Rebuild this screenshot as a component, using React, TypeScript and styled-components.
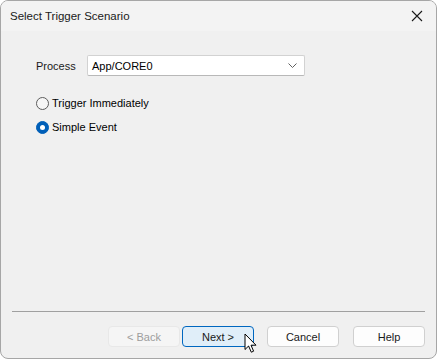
import React from 'react';
import styled, { createGlobalStyle } from 'styled-components';

const GlobalStyle = createGlobalStyle`
  html, body {
    margin: 0;
    padding: 0;
    background: #ffffff;
  }
  body {
    font-family: 'Liberation Sans', Arial, sans-serif;
    font-size: 11px;
    color: #000000;
  }
`;

const Window = styled.div`
  position: relative;
  box-sizing: border-box;
  width: 437px;
  height: 359px;
  border: 1px solid #a6a6a6;
  border-radius: 8px;
  overflow: hidden;
  display: flex;
  flex-direction: column;
  background: #f0f0f0;
`;

const TitleBar = styled.div`
  height: 30px;
  flex: none;
  display: flex;
  align-items: center;
  justify-content: space-between;
  padding: 0 13px 0 9px;
  background: #f3f3f3;
  font-size: 11.5px;
  color: #1a1a1a;
`;

const CloseIcon = styled.svg`
  width: 12px;
  height: 12px;
  margin-top: -1px;
`;

const Body = styled.div`
  flex: 1;
  display: flex;
  flex-direction: column;
  padding: 24px 0 0 35px;
`;

const FieldRow = styled.div`
  display: flex;
  align-items: center;
`;

const Label = styled.span`
  width: 51px;
  color: #1a1a1a;
`;

const Combo = styled.div`
  box-sizing: border-box;
  width: 218px;
  height: 21px;
  display: flex;
  align-items: center;
  justify-content: space-between;
  padding: 0 7px 0 4px;
  background: #ffffff;
  border: 1px solid #d2d2d2;
  border-bottom-color: #b8b8b8;
  border-radius: 2px;
`;

const RadioList = styled.div`
  display: flex;
  flex-direction: column;
  gap: 4px;
  margin-top: 17px;
`;

const RadioRow = styled.label`
  display: flex;
  align-items: center;
  height: 20px;
  gap: 3px;
`;

const RadioDot = styled.span<{ $checked?: boolean }>`
  box-sizing: border-box;
  width: 13px;
  height: 13px;
  border-radius: 50%;
  display: grid;
  place-items: center;
  background: ${({ $checked }) => ($checked ? '#005fb8' : '#f6f6f6')};
  border: 1px solid ${({ $checked }) => ($checked ? '#005fb8' : '#5c5c5c')};
  &::after {
    content: '';
    display: ${({ $checked }) => ($checked ? 'block' : 'none')};
    width: 5px;
    height: 5px;
    border-radius: 50%;
    background: #ffffff;
  }
`;

const Footer = styled.div`
  flex: none;
  padding: 0 11px 11px 11px;
`;

const Separator = styled.div`
  height: 1px;
  background: #a0a0a0;
  margin-bottom: 14px;
`;

const ButtonRow = styled.div`
  display: flex;
  justify-content: flex-end;
`;

const Button = styled.button<{ $variant?: 'default' | 'disabled'; $gap?: number }>`
  box-sizing: border-box;
  width: 72px;
  height: 21px;
  margin-right: ${({ $gap }) => $gap ?? 0}px;
  padding: 0;
  font: inherit;
  border-radius: 4px;
  border: 1px solid
    ${({ $variant }) =>
      $variant === 'default' ? '#0067c0' : $variant === 'disabled' ? '#e8e8e8' : '#d0d0d0'};
  background: ${({ $variant }) =>
    $variant === 'default' ? '#e0eef9' : $variant === 'disabled' ? '#f5f5f5' : '#fdfdfd'};
  color: ${({ $variant }) => ($variant === 'disabled' ? '#9d9d9d' : '#1a1a1a')};
`;

const Cursor = styled.svg`
  position: absolute;
  left: 243px;
  top: 332px;
  width: 14px;
  height: 21px;
`;

export default function App() {
  return (
    <>
      <GlobalStyle />
      <Window>
        <TitleBar>
          <span>Select Trigger Scenario</span>
          <CloseIcon viewBox="0 0 12 12">
            <path d="M1 1 L11 11 M11 1 L1 11" stroke="#1a1a1a" strokeWidth="1.1" fill="none" />
          </CloseIcon>
        </TitleBar>
        <Body>
          <FieldRow>
            <Label>Process</Label>
            <Combo>
              <span>App/CORE0</span>
              <svg width="9" height="5" viewBox="0 0 9 5">
                <path d="M0.5 0.5 L4.5 4.5 L8.5 0.5" stroke="#606060" fill="none" strokeWidth="1" />
              </svg>
            </Combo>
          </FieldRow>
          <RadioList>
            <RadioRow>
              <RadioDot />
              <span>Trigger Immediately</span>
            </RadioRow>
            <RadioRow>
              <RadioDot $checked />
              <span>Simple Event</span>
            </RadioRow>
          </RadioList>
        </Body>
        <Footer>
          <Separator />
          <ButtonRow>
            <Button $variant="disabled" $gap={2}>&lt; Back</Button>
            <Button $variant="default" $gap={13}>Next &gt;</Button>
            <Button $gap={14}>Cancel</Button>
            <Button>Help</Button>
          </ButtonRow>
        </Footer>
        <Cursor viewBox="0 0 14 21">
          <path
            d="M1 1 L1 16.5 L4.6 13 L7.3 19.2 L9.6 18.2 L7 12.2 L12 12.2 Z"
            fill="#ffffff"
            stroke="#000000"
            strokeWidth="1"
            strokeLinejoin="round"
          />
        </Cursor>
      </Window>
    </>
  );
}
